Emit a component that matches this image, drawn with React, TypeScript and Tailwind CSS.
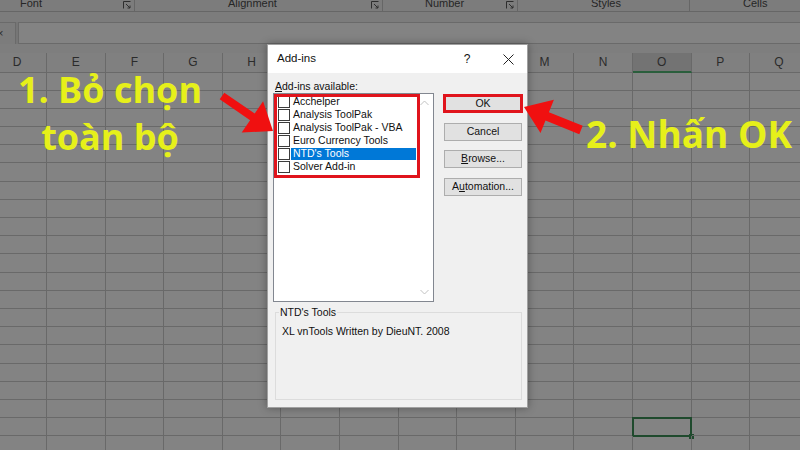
import React from 'react';

const COLS = ['D', 'E', 'F', 'G', 'H', 'I', 'J', 'K', 'L', 'M', 'N', 'O', 'P', 'Q'];
const ROWS = Array.from({ length: 21 }, (_, i) => i);
const ITEMS = ['Acchelper', 'Analysis ToolPak', 'Analysis ToolPak - VBA', 'Euro Currency Tools', "NTD's Tools", 'Solver Add-in'];

function Launcher() {
  return (
    <svg width="8" height="8" viewBox="0 0 8 8" className="absolute right-[3px] top-[1px]">
      <path d="M0.5 7.5V0.5H7.5" fill="none" stroke="#2e2e2e" strokeWidth="1" />
      <path d="M3 3L7 7M7 4.5V7H4.5" fill="none" stroke="#2e2e2e" strokeWidth="1" />
    </svg>
  );
}

function Ribbon() {
  return (
    <div className="flex h-[12px] overflow-hidden border-b border-[#666666] bg-[#7c7c7c] text-[11px] leading-[12px] text-[#262626]">
      <div className="relative w-[135px] shrink-0 border-r border-[#666666] pl-[20px]">
        <span className="-mt-[3px] block">Font</span>
        <Launcher />
      </div>
      <div className="relative w-[248px] shrink-0 border-r border-[#666666] pl-[93px]">
        <span className="-mt-[3px] block">Alignment</span>
        <Launcher />
      </div>
      <div className="relative w-[135px] shrink-0 border-r border-[#666666] pl-[42px]">
        <span className="-mt-[3px] block">Number</span>
        <Launcher />
      </div>
      <div className="relative w-[172px] shrink-0 border-r border-[#666666] pl-[73px]">
        <span className="-mt-[3px] block">Styles</span>
      </div>
      <div className="relative flex-1 pl-[53px]">
        <span className="-mt-[3px] block">Cells</span>
      </div>
    </div>
  );
}

function Sheet() {
  return (
    <div className="flex flex-col">
      <div className="flex h-[32px] items-end bg-[#7c7c7c]">
        <div className="flex h-[22px] w-[15px] shrink-0 items-center border-t border-[#6a6a6a] text-[11px] text-[#2e2e2e]">
          <span className="-ml-[3px]">×</span>
        </div>
        <div className="h-[22px] w-[4px] shrink-0 border-x border-[#6a6a6a] bg-[#767676]" />
        <div className="h-[22px] flex-1 border-y border-[#6a6a6a] bg-[#838383]" />
      </div>
      <div className="h-[9px] bg-[#7e7e7e]" />
      <div className="ml-[-11.6px] flex h-[19.5px] bg-[#808080] text-[12px] text-[#2b2b2b]">
        {COLS.map((c) => (
          <div
            key={c}
            className={
              c === 'O'
                ? 'flex h-full w-[58.6px] shrink-0 items-center justify-center border-r border-b-2 border-r-[#696969] border-b-[#2a5e3c] bg-[#737373]'
                : 'flex h-full w-[58.6px] shrink-0 items-center justify-center border-r border-b border-[#696969]'
            }
          >
            {c}
          </div>
        ))}
      </div>
      {ROWS.map((r) => (
        <div key={r} className="ml-[-11.6px] flex h-[18.2px] bg-[#838383]">
          {COLS.map((c) => (
            <div key={c} className="relative h-full w-[58.6px] shrink-0 border-r border-b border-[#696969]">
              {r === 19 && c === 'O' && (
                <div className="absolute -left-[1px] -top-[1px] h-[20px] w-[60px] border-2 border-[#1f4a2d]">
                  <div className="absolute -bottom-[4px] -right-[4px] h-[5px] w-[5px] bg-[#1f4a2d]" />
                </div>
              )}
            </div>
          ))}
        </div>
      ))}
    </div>
  );
}

function Dialog() {
  return (
    <div
      className="absolute left-[267px] top-[44px] flex h-[364px] w-[261px] flex-col border border-[#a0a0a0] bg-[#f0f0f0] text-[10.5px] text-[#111] shadow-[0_0_8px_rgba(0,0,0,0.35)]"
      style={{ fontFamily: '"Liberation Sans", Arial, sans-serif' }}
    >
      <div className="flex h-[28px] shrink-0 items-center bg-white pl-[9px] pr-[12px] text-[11.5px]">
        <span className="flex-1">Add-ins</span>
        <span className="w-[14px] text-center text-[12px]">?</span>
        <span className="ml-[27px] flex w-[14px] justify-center">
          <svg width="11" height="11" viewBox="0 0 11 11">
            <path d="M0.5 0.5L10.5 10.5M10.5 0.5L0.5 10.5" stroke="#222" strokeWidth="1" />
          </svg>
        </span>
      </div>
      <div className="flex flex-1 flex-col pl-[5px] pt-[6px]">
        <div className="pl-[2px] leading-[14px]">
          <span className="underline">A</span>dd-ins available:
        </div>
        <div className="flex">
          <div className="relative h-[209px] w-[161px] shrink-0 border border-[#828790] bg-white pt-[1px]">
            {ITEMS.map((it) => (
              <div key={it} className="flex h-[13px] items-center pl-[4px]">
                <div className="h-[12px] w-[12px] shrink-0 border border-[#3c3c3c] bg-white" />
                <div
                  className={
                    it === "NTD's Tools"
                      ? 'ml-[1px] flex h-[12px] w-[125px] items-center bg-[#0078d7] pl-[2px] text-white'
                      : 'ml-[1px] flex h-[12px] w-[125px] items-center pl-[2px]'
                  }
                >
                  {it}
                </div>
              </div>
            ))}
            <div className="absolute right-[4px] top-[6px]">
              <svg width="9" height="6" viewBox="0 0 9 6">
                <path d="M0.5 5L4.5 1L8.5 5" fill="none" stroke="#c2c2c2" strokeWidth="1" />
              </svg>
            </div>
            <div className="absolute bottom-[6px] right-[4px]">
              <svg width="9" height="6" viewBox="0 0 9 6">
                <path d="M0.5 1L4.5 5L8.5 1" fill="none" stroke="#c2c2c2" strokeWidth="1" />
              </svg>
            </div>
            <div className="absolute left-0 top-0 h-[84px] w-[146px] border-[3px] border-[#e0141c]" />
          </div>
          <div className="ml-[9px] flex flex-col gap-[9.5px] pt-[1px]">
            <div className="flex h-[19px] w-[80px] items-center justify-center border-[3px] border-[#e0141c] bg-[#e1e1e1]">
              OK
            </div>
            <div className="ml-[1px] flex h-[18px] w-[78px] items-center justify-center border border-[#adadad] bg-[#e1e1e1]">
              Cancel
            </div>
            <div className="ml-[1px] flex h-[18px] w-[78px] items-center justify-center border border-[#adadad] bg-[#e1e1e1]">
              <span className="underline">B</span>rowse...
            </div>
            <div className="ml-[1px] flex h-[18px] w-[78px] items-center justify-center border border-[#adadad] bg-[#e1e1e1]">
              A<span className="underline">u</span>tomation...
            </div>
          </div>
        </div>
        <fieldset className="ml-[2px] mt-[3px] h-[95px] w-[247px] border border-[#dcdcdc]">
          <legend className="ml-[3px] px-[1px] leading-[14px]">NTD's Tools</legend>
          <div className="mt-[5px] pl-[6px] leading-[14px]">XL vnTools Written by DieuNT. 2008</div>
        </fieldset>
      </div>
    </div>
  );
}

export default function App() {
  return (
    <div
      className="relative h-[450px] w-[800px] overflow-hidden bg-[#838383]"
      style={{ fontFamily: '"Liberation Sans", Arial, sans-serif' }}
    >
      <Ribbon />
      <Sheet />
      <Dialog />
      <div
        className="absolute left-0 top-[65.5px] w-[220px] text-center text-[36px] font-bold leading-[47px] text-[#e6f01a]"
        style={{ fontFamily: '"Open Sans", sans-serif' }}
      >
        <div>1. Bỏ chọn</div>
        <div>toàn bộ</div>
      </div>
      <div
        className="absolute left-[586px] top-[113.6px] whitespace-nowrap text-[37px] font-bold leading-[40px] text-[#e6f01a]"
        style={{ fontFamily: '"Open Sans", sans-serif' }}
      >
        2. Nhấn OK
      </div>
      <svg className="pointer-events-none absolute left-0 top-0" width="800" height="450" viewBox="0 0 800 450">
        <polygon
          points="224.3,92.7 254.7,113.6 263.1,101.2 273,131 241.7,132.6 250.1,120.2 219.7,99.3"
          fill="#f01010"
        />
        <polygon
          points="524,107 553.9,99.7 548.9,112.2 582.7,125.8 579.3,134.2 545.5,120.6 540.5,133.1"
          fill="#f01010"
        />
      </svg>
    </div>
  );
}
